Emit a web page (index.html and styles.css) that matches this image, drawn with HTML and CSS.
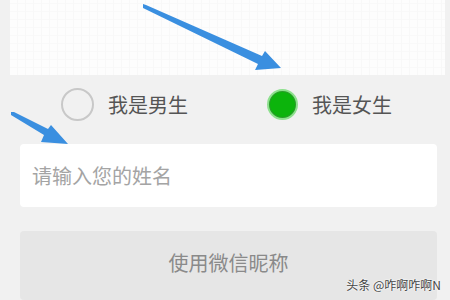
FILE: index.html
```html
<!DOCTYPE html>
<html>
<head>
<meta charset="utf-8">
<link rel="stylesheet" href="styles.css">
</head>
<body>
<div class="page">
  <div class="panel"></div>
  <div class="radios">
    <div class="opt opt-male"><span class="radio"></span><span class="label">我是男生</span></div>
    <div class="opt opt-female"><span class="radio checked"></span><span class="label">我是女生</span></div>
  </div>
  <div class="input">请输入您的姓名</div>
  <div class="button">使用微信昵称</div>
  <div class="watermark">头条 @咋啊咋啊N</div>
  <svg class="arrows" width="450" height="300" viewBox="0 0 450 300">
    <polygon fill="#3a8fe0" points="143,4 146,5 262,56 265,51 281,68 255,70 258,64 143,8"/>
    <polygon fill="#3a8fe0" points="11,112 14,112 48,129 51,125 68,144 41,142 44,135 11,115"/>
  </svg>
</div>
</body>
</html>
```
FILE: styles.css
```css
html, body {
  margin: 0;
  padding: 0;
}
body {
  background: #f1f1f1;
  font-family: "Noto Sans CJK SC", "Noto Sans", sans-serif;
}
.page {
  position: relative;
  width: 450px;
  height: 300px;
  overflow: hidden;
  display: flex;
  flex-direction: column;
}
.panel {
  height: 77px;
  margin: 0 5px 0 10px;
  background-color: #fdfdfd;
  background-image:
    repeating-linear-gradient(90deg, transparent 0, transparent 7px, #f8f8f8 7px, #f8f8f8 8px),
    repeating-linear-gradient(0deg, transparent 0, transparent 7px, #f9f9f9 7px, #f9f9f9 8px);
}
.radios {
  height: 60px;
  display: flex;
  align-items: center;
  padding-left: 61px;
}
.opt {
  display: flex;
  align-items: center;
  gap: 14px;
}
.opt-male {
  width: 206px;
}
.radio {
  width: 29px;
  height: 29px;
  border: 2px solid #c8c8c8;
  border-radius: 50%;
  box-sizing: content-box;
}
.radio.checked {
  width: 27px;
  height: 27px;
  border: 2px solid #8ee08e;
  background: #0cb40c;
  box-shadow: inset 0 0 0 1px #2e9a2e;
}
.label {
  font-size: 20px;
  color: #555;
  line-height: 24px;
}
.input {
  margin: 10px 13px 0 20px;
  height: 64px;
  background: #fff;
  border-radius: 4px;
  display: flex;
  align-items: center;
  padding-left: 12px;
  font-size: 20px;
  color: #a4a4a4;
}
.button {
  margin: 24px 13px 0 20px;
  height: 70px;
  background: #e6e6e6;
  border-radius: 4px;
  display: flex;
  justify-content: center;
  padding-top: 19px;
  box-sizing: border-box;
  font-size: 20px;
  color: #8a8a8a;
  line-height: 26px;
}
.watermark {
  position: absolute;
  right: 9px;
  top: 276px;
  font-size: 12px;
  color: #444;
  text-shadow: 0 0 2px #fff, 0 0 2px #fff;
}
.arrows {
  position: absolute;
  left: 0;
  top: 0;
}
```
